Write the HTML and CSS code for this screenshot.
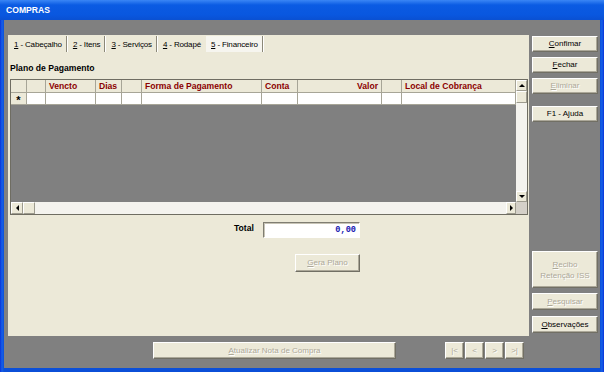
FILE: index.html
```html
<!DOCTYPE html>
<html lang="pt-BR">

<head>
  <meta charset="UTF-8">
  <meta name="viewport" content="width=device-width, initial-scale=1.0">
  <title>COMPRAS</title>
  <link rel="stylesheet" href="styles.css">
</head>

<body>
  <div class="window">
    <div class="titlebar">COMPRAS</div>
    <div class="client">
      <div class="main">
        <div class="panel">
          <div class="tabs">
            <span class="tab"><span><u>1</u> - Cabeçalho</span></span>
            <span class="tab"><span><u>2</u> - Itens</span></span>
            <span class="tab"><span><u>3</u> - Serviços</span></span>
            <span class="tab tab-plain"><span><u>4</u> - Rodapé</span></span>
            <span class="tab active"><span><u>5</u> - Financeiro</span></span>
            <span class="tab-rest"></span>
          </div>

          <div class="section-title">Plano de Pagamento</div>

          <div class="grid">
            <div class="grid-body">
              <div class="grid-cells">
                <div class="row header">
                  <div class="cell ind"></div>
                  <div class="cell"></div>
                  <div class="cell">Vencto</div>
                  <div class="cell">Dias</div>
                  <div class="cell"></div>
                  <div class="cell">Forma de Pagamento</div>
                  <div class="cell">Conta</div>
                  <div class="cell right">Valor</div>
                  <div class="cell"></div>
                  <div class="cell">Local de Cobrança</div>
                </div>
                <div class="row new-row">
                  <div class="cell ind">*</div>
                  <div class="cell"></div>
                  <div class="cell"></div>
                  <div class="cell"></div>
                  <div class="cell"></div>
                  <div class="cell"></div>
                  <div class="cell"></div>
                  <div class="cell"></div>
                  <div class="cell"></div>
                  <div class="cell"></div>
                </div>
              </div>
              <div class="vscroll">
                <div class="sb-btn"><span class="arrow up"></span></div>
                <div class="sb-thumb-v"></div>
                <div class="sb-track"></div>
                <div class="sb-btn"><span class="arrow down"></span></div>
              </div>
            </div>
            <div class="hscroll">
              <div class="sb-btn"><span class="arrow left"></span></div>
              <div class="sb-thumb-h"></div>
              <div class="sb-track"></div>
              <div class="sb-btn"><span class="arrow right"></span></div>
              <div class="sb-corner"></div>
            </div>
          </div>

          <div class="totals">
            <div class="total-row">
              <span class="total-label">Total</span>
              <div class="total-box">0,00</div>
            </div>
            <button class="btn disabled gera"><u>G</u>era Plano</button>
          </div>
        </div>

        <div class="side">
          <button class="btn"><u>C</u>onfimar</button>
          <button class="btn"><u>F</u>echar</button>
          <button class="btn disabled"><u>E</u>liminar</button>
          <button class="btn ajuda">F1 - Ajuda</button>
          <button class="btn disabled recibo"><u>R</u>ecibo<br>Retenção ISS</button>
          <button class="btn disabled tall"><u>P</u>esquisar</button>
          <button class="btn tall"><u>O</u>bservações</button>
        </div>
      </div>

      <div class="footer">
        <button class="btn disabled atualizar"><u>A</u>tualizar Nota de Compra</button>
        <div class="nav">
          <button class="btn disabled nav-btn">|&lt;</button>
          <button class="btn disabled nav-btn">&lt;</button>
          <button class="btn disabled nav-btn">&gt;</button>
          <button class="btn disabled nav-btn">&gt;|</button>
        </div>
      </div>
    </div>
  </div>
</body>

</html>
```

FILE: styles.css
```css
/* Janela COMPRAS - estilo Windows XP */
body {
  margin: 0;
  padding: 0;
  font-family: "Liberation Sans", Arial, sans-serif;
  font-size: 8px;
  color: #000;
}

.window {
  width: 604px;
  height: 372px;
  background: linear-gradient(to right, #0831d9, #1660e8 2px, #0b4fd8 4px, #0b4fd8 600px, #1660e8 602px, #0831d9);
  display: flex;
  flex-direction: column;
}

.titlebar {
  height: 20px;
  line-height: 21px;
  padding-left: 6px;
  color: #fff;
  font-weight: bold;
  font-size: 8.6px;
  background: linear-gradient(#3a86f5, #0b5be3 25%, #0957df 75%, #0a50d2);
}

.client {
  margin: 0 4px 4px 4px;
  height: 333px;
  background-color: #808080;
  padding: 15px 2px 0 4px;
}

.main {
  display: flex;
  gap: 3px;
}

/* painel principal */
.panel {
  width: 521px;
  height: 301px;
  background-color: #ece9d8;
  box-sizing: border-box;
  padding-top: 1px;
}

.tabs {
  display: flex;
  height: 16px;
  align-items: stretch;
  padding-left: 1px;
}

.tab {
  display: flex;
  align-items: center;
  padding: 0 4px 0 5px;
  border-right: 1px solid #8b8878;
  box-shadow: 1px 0 0 #fff;
  margin-right: 1px;
  white-space: pre;
  letter-spacing: -0.15px;
}

.tab-plain {
  border-right: none;
  box-shadow: none;
}

.tab.active {
  background-color: #f6f5ef;
}

.tab-rest {
  flex: 1;
}

.section-title {
  font-weight: bold;
  font-size: 8.6px;
  padding: 11px 0 0 2px;
  height: 17px;
  box-sizing: border-box;
}

/* grade */
.grid {
  margin: 10px 0 0 2px;
  width: 518px;
  height: 136px;
  box-sizing: border-box;
  border: 1px solid #6f6d62;
  display: flex;
  flex-direction: column;
}

.grid-body {
  flex: 1;
  display: flex;
  min-height: 0;
}

.grid-cells {
  width: 505px;
  background-color: #808080;
}

.row {
  display: grid;
  grid-template-columns: 16px 19px 50px 26px 20px 120px 36px 84px 20px 114px;
}

.cell {
  box-sizing: border-box;
  border-right: 1px solid #a7a597;
  border-bottom: 1px solid #a7a597;
  padding: 0 3px;
  white-space: nowrap;
  overflow: hidden;
}

.header .cell {
  height: 13px;
  line-height: 12px;
  background-color: #ece9d8;
  color: #8b0000;
  font-weight: bold;
  font-size: 8.6px;
}

.new-row .cell {
  height: 12px;
  background-color: #fff;
}

.new-row .cell.ind {
  background-color: #ece9d8;
  text-align: center;
  font-size: 11px;
  line-height: 14px;
  font-weight: bold;
  padding: 0;
}

.cell.right {
  text-align: right;
}

/* barras de rolagem */
.vscroll {
  width: 11px;
  display: flex;
  flex-direction: column;
  background-color: #f4f3ee;
}

.hscroll {
  height: 12px;
  display: flex;
  background-color: #f4f3ee;
}

.sb-btn {
  width: 11px;
  height: 11px;
  box-sizing: border-box;
  background-color: #ece9d8;
  border: 1px solid;
  border-color: #fff #9d9b8e #9d9b8e #fff;
  display: flex;
  align-items: center;
  justify-content: center;
  flex-shrink: 0;
}

.hscroll .sb-btn {
  height: 12px;
  width: 12px;
}

.hscroll .sb-btn:nth-child(4) {
  width: 10px;
}

.sb-track {
  flex: 1;
}

.sb-thumb-v {
  height: 12px;
  box-sizing: border-box;
  background-color: #ece9d8;
  border: 1px solid;
  border-color: #fff #9d9b8e #9d9b8e #fff;
}

.sb-thumb-h {
  width: 12px;
  box-sizing: border-box;
  background-color: #ece9d8;
  border: 1px solid;
  border-color: #fff #9d9b8e #9d9b8e #fff;
}

.sb-corner {
  width: 11px;
  background-color: #d4d0c8;
}

.arrow {
  width: 0;
  height: 0;
  border: 3px solid transparent;
}

.arrow.up {
  border-bottom-color: #000;
  border-top-width: 0;
}

.arrow.down {
  border-top-color: #000;
  border-bottom-width: 0;
}

.arrow.left {
  border-right-color: #000;
  border-left-width: 0;
}

.arrow.right {
  border-left-color: #000;
  border-right-width: 0;
}

/* total */
.totals {
  width: 126px;
  margin: 7px 0 0 226px;
  display: flex;
  flex-direction: column;
  align-items: flex-end;
}

.total-row {
  display: flex;
  align-items: center;
  width: 100%;
  justify-content: space-between;
}

.total-label {
  font-weight: bold;
  font-size: 8.6px;
  margin-top: -4px;
}

.total-box {
  width: 97px;
  height: 16px;
  box-sizing: border-box;
  background-color: #fff;
  border: 1px solid;
  border-color: #7f7d72 #fff #fff #7f7d72;
  box-shadow: inset 1px 1px 0 #c7c4b6;
  text-align: right;
  padding-right: 3px;
  line-height: 14px;
  font-family: "Liberation Mono", "Courier New", monospace;
  font-weight: bold;
  font-size: 8.6px;
  color: #1515b0;
}

/* botões */
.btn {
  font-family: "Liberation Sans", Arial, sans-serif;
  font-size: 8px;
  font-weight: normal;
  color: #000;
  background-color: #ece9d8;
  border: 1px solid;
  border-color: #fff #716f64 #716f64 #fff;
  box-shadow: inset -1px -1px 0 #aca899;
  padding: 0;
  margin: 0;
  height: 16px;
  display: block;
  line-height: 12px;
}

.btn.disabled {
  color: #aca899;
  text-shadow: 1px 1px 0 #fff;
}

.gera {
  width: 65px;
  height: 18px;
  margin-top: 16px;
}

.side {
  width: 66px;
  display: flex;
  flex-direction: column;
  padding-top: 1px;
}

.side .btn {
  width: 66px;
  margin-bottom: 5px;
}

.side .btn.ajuda {
  margin-top: 7px;
}

.side .btn.recibo {
  margin-top: 124px;
  height: 37px;
  line-height: 11px;
}

.side .btn.tall {
  height: 17px;
  margin-bottom: 6px;
}

.footer {
  display: flex;
  margin-top: 3px;
  height: 17px;
}

.atualizar {
  width: 243px;
  height: 17px;
  margin-left: 145px;
}

.nav {
  display: flex;
  gap: 1px;
  margin-left: 49px;
}

.nav-btn {
  width: 19px;
  height: 17px;
}
```
